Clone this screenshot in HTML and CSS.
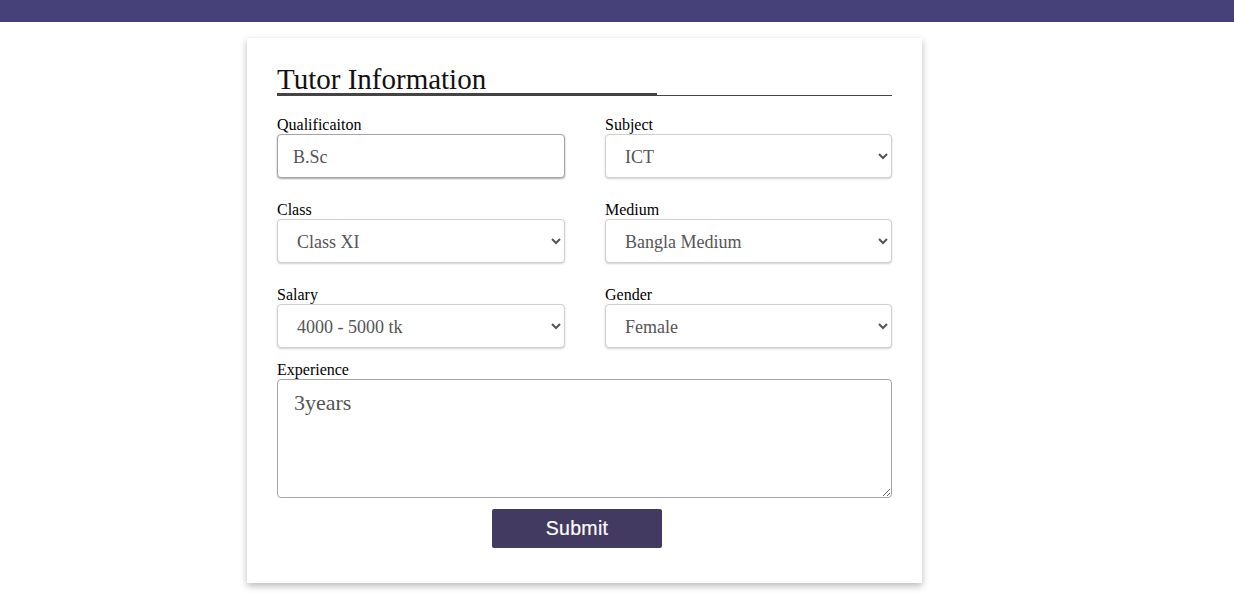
FILE: index.html
```html
<!DOCTYPE html>
<html lang="en">
<head>
<meta charset="utf-8">
<title>Tutor Information</title>
<link rel="stylesheet" href="styles.css">
</head>
<body>
<header class="topbar"></header>
<main class="card">
  <div class="card-title-wrap">
    <h2 class="card-title">Tutor Information</h2>
  </div>
  <form class="form">
    <div class="grid">
      <div class="field">
        <label class="label" for="qual">Qualificaiton</label>
        <input class="control input" id="qual" type="text" value="B.Sc">
      </div>
      <div class="field">
        <label class="label" for="subject">Subject</label>
        <select class="control select" id="subject"><option>ICT</option></select>
      </div>
      <div class="field">
        <label class="label" for="class">Class</label>
        <select class="control select" id="class"><option>Class XI</option></select>
      </div>
      <div class="field">
        <label class="label" for="medium">Medium</label>
        <select class="control select" id="medium"><option>Bangla Medium</option></select>
      </div>
      <div class="field">
        <label class="label" for="salary">Salary</label>
        <select class="control select" id="salary"><option>4000 - 5000 tk</option></select>
      </div>
      <div class="field">
        <label class="label" for="gender">Gender</label>
        <select class="control select" id="gender"><option>Female</option></select>
      </div>
    </div>
    <div class="field field-wide">
      <label class="label" for="exp">Experience</label>
      <textarea class="textarea" id="exp">3years</textarea>
    </div>
    <div class="actions">
      <button class="submit" type="button">Submit</button>
    </div>
  </form>
</main>
<script src="script.js"></script>
</body>
</html>
```

FILE: styles.css
```css
html, body {
  margin: 0;
  padding: 0;
  background: #ffffff;
}

body {
  font-family: "Liberation Serif", "Times New Roman", serif;
  color: #000;
  min-height: 607px;
}

.topbar {
  height: 22px;
  background: #47417a;
}

.card {
  box-sizing: border-box;
  width: 675px;
  margin: 16px 0 20px 247px;
  padding: 25px 30px 35px;
  background: #fff;
  box-shadow: 0 3px 7px rgba(0, 0, 0, 0.28);
}

.card-title-wrap {
  position: relative;
  border-bottom: 1px solid #444;
}

.card-title-wrap::after {
  content: "";
  position: absolute;
  left: 0;
  bottom: -1px;
  width: 380px;
  height: 3px;
  background: #444;
}

.card-title {
  margin: 0;
  font-family: "Liberation Serif", serif;
  font-weight: normal;
  font-size: 29px;
  line-height: 32px;
  color: #111;
}

.form {
  margin-top: 19px;
}

.grid {
  display: grid;
  grid-template-columns: 288px 287px;
  column-gap: 40px;
  row-gap: 22px;
}

.field {
  display: flex;
  flex-direction: column;
}

.label {
  font-size: 16px;
  line-height: 19px;
  color: #000;
}

.control {
  box-sizing: border-box;
  height: 44px;
  width: 100%;
  margin: 0;
  font-family: "Liberation Serif", serif;
  font-size: 18px;
  color: #555;
  background: #fff;
  border-radius: 4px;
}

.input {
  padding: 2px 15px 0;
  border: 1px solid #a6a6a6;
  box-shadow: 0 1px 2px rgba(0, 0, 0, 0.35);
  outline: none;
}

.select {
  padding: 2px 8px 0 15px;
  border: 1px solid #cfcfcf;
  box-shadow: 0 1px 2px rgba(0, 0, 0, 0.18);
}

.field-wide {
  margin-top: 12px;
}

.textarea {
  display: block;
  box-sizing: border-box;
  width: 100%;
  height: 119px;
  margin: 0;
  padding: 10px 16px 9px;
  font-family: "Liberation Serif", serif;
  font-size: 22px;
  line-height: 26px;
  color: #555;
  caret-color: #222;
  border: 1px solid #a6a6a6;
  border-radius: 4px;
  outline: none;
  resize: vertical;
}

.textarea:focus {
  outline: none;
}

.actions {
  display: flex;
  margin-top: 11px;
  padding-left: 215px;
}

.submit {
  width: 170px;
  height: 39px;
  border: none;
  border-radius: 2px;
  background: #433a61;
  color: #fff;
  font-family: "Liberation Sans", Arial, sans-serif;
  font-size: 19.5px;
  letter-spacing: 0.3px;
  -webkit-text-stroke: 0.2px #fff;
  cursor: pointer;
}
```

FILE: script.js
```js
var ta = document.getElementById('exp');
ta.focus();
ta.setSelectionRange(ta.value.length, ta.value.length);
```
